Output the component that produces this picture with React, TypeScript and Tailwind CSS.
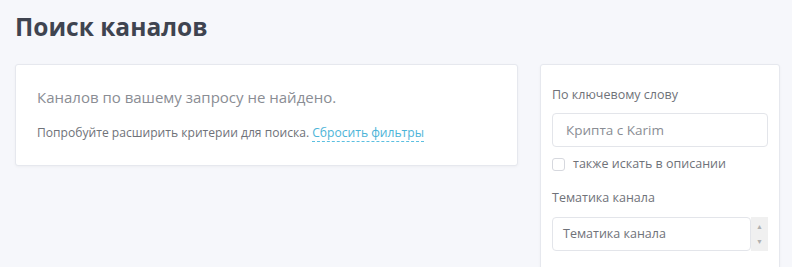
export default function App() {
  return (
    <div
      className="min-h-[267px] w-full overflow-hidden bg-[#f6f7fb] text-[#555]"
      style={{ fontFamily: '"Open Sans", "Noto Sans", sans-serif' }}
    >
      <div className="pl-[15px] pr-[12px] pt-[10px]">
        <h1 className="text-[24.5px] font-bold leading-[34px] text-[#3f4450]">Поиск каналов</h1>

        <div className="mt-[20px] flex items-start gap-[22px]">
          <div className="w-[503px] rounded-[3px] border border-[#e6e8ee] bg-white px-[21px] pb-[23px] pt-[21px] shadow-[0_1px_3px_rgba(0,0,0,0.04)]">
            <p className="text-[15px] leading-[22px] text-[#8a8d94]">Каналов по вашему запросу не найдено.</p>
            <p className="mt-[16px] text-[12.1px] leading-[18px] text-[#6f7279]">
              Попробуйте расширить критерии для поиска.{' '}
              <a className="border-b border-dashed border-[#5bbfe0] text-[#4cb4d8]" href="#">
                Сбросить фильтры
              </a>
            </p>
          </div>

          <div className="w-[240px] rounded-[3px] border border-[#e6e8ee] bg-white px-[11px] pb-[20px] pt-[21px] shadow-[0_1px_3px_rgba(0,0,0,0.04)]">
            <label className="block text-[12.5px] leading-[18px] text-[#6f7279]">По ключевому слову</label>
            <div className="mt-[9px] flex h-[34px] items-center rounded-[4px] border border-[#e3e5ea] px-[13px] text-[13.5px] text-[#8a8d94]">
              Крипта с Karim
            </div>
            <label className="mt-[8px] flex items-center gap-[8px] text-[12.5px] leading-[18px] text-[#6f7279]">
              <span className="h-[13px] w-[13px] rounded-[3px] border border-[#d6d8de] bg-white" />
              также искать в описании
            </label>
            <label className="mt-[16px] block text-[12.5px] leading-[18px] text-[#6f7279]">Тематика канала</label>
            <div className="mt-[10px] flex h-[34px]">
              <div className="flex flex-1 items-center rounded-[4px] border border-[#e3e5ea] px-[10px] text-[12.5px] text-[#6f7279]">
                Тематика канала
              </div>
              <div className="flex w-[17px] flex-col items-center justify-between bg-[#f0f0f0] py-[6px] text-[7px] leading-none text-[#b0b0b0]">
                <span>▲</span>
                <span>▼</span>
              </div>
            </div>
          </div>
        </div>
      </div>
    </div>
  );
}
